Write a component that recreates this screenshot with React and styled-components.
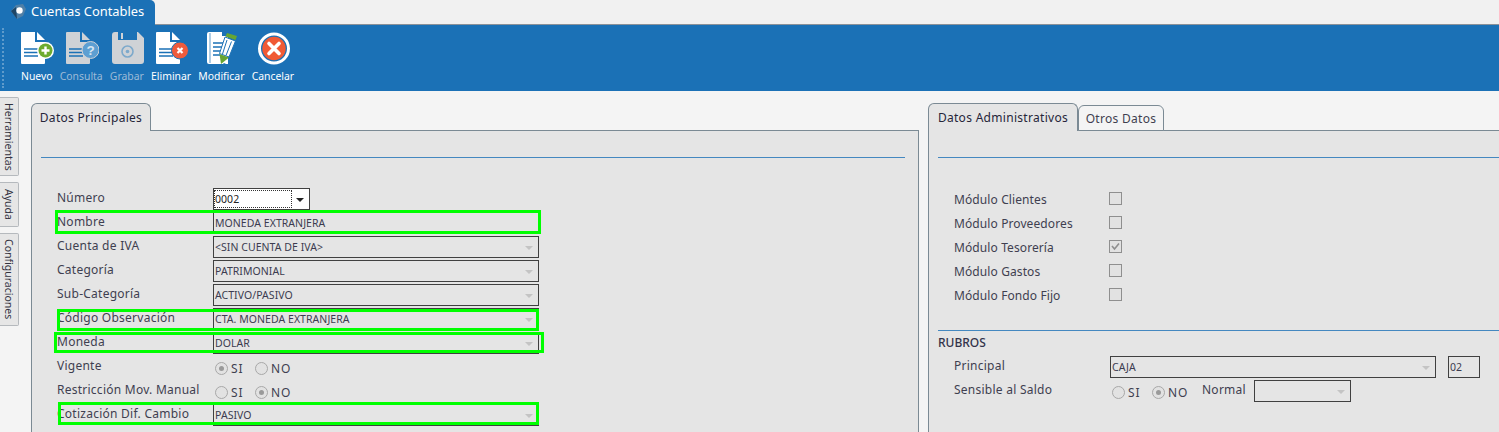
import React from 'react'
import styled, { createGlobalStyle } from 'styled-components'

const Global = createGlobalStyle`
  html, body {
    margin: 0;
    padding: 0;
    height: 432px;
    overflow: hidden;
    background: #f4f4f4;
    font-family: "Noto Sans", "Open Sans", sans-serif;
    font-size: 12px;
    color: #3f3f50;
  }
  * { box-sizing: border-box; }
`

const Page = styled.div`
  width: 1499px;
  height: 432px;
  overflow: hidden;
  position: relative;
`

const TopTabs = styled.div`
  height: 25px;
  background: #f1f1f1;
  border-bottom: 1px solid #8a9199;
`

const MainTab = styled.div`
  width: 155px;
  height: 25px;
  background: #1b71b6;
  border-top-right-radius: 5px;
  color: #fff;
  font-size: 12.9px;
  display: flex;
  align-items: center;
  gap: 5px;
  padding: 0 0 3px 11px;
`

const Toolbar = styled.div`
  height: 66px;
  background: #1b71b6;
  display: flex;
  padding: 7px 0 0 21px;
  gap: 7.2px;
  position: relative;

  &::before {
    content: '';
    position: absolute;
    left: 2px;
    top: 3px;
    bottom: 3px;
    border-left: 2px dotted #5f9bcb;
  }
`

const ToolButton = styled.div`
  display: flex;
  flex-direction: column;
  align-items: center;
  font-size: 10.4px;
  color: ${p => (p.$off ? '#9dbbd6' : '#fff')};
  gap: 4px;

  svg {
    margin: 0 -10px;
    position: relative;
    left: 1px;
  }
`

const Body = styled.div`
  display: flex;
  height: 341px;
`

const SideTabs = styled.div`
  width: 19px;
  padding-top: 6px;
  display: flex;
  flex-direction: column;
  gap: 6px;
  flex-shrink: 0;
`

const SideTab = styled.div`
  width: 19px;
  height: ${p => p.$h}px;
  background: #e6e6e6;
  border: 1px solid #b5b9bd;
  border-left: none;
  border-radius: 0 2px 2px 0;
  writing-mode: vertical-rl;
  display: flex;
  align-items: center;
  justify-content: center;
  font-size: 10.5px;
  color: #33333f;
`

const Panels = styled.div`
  flex: 1;
  display: flex;
  padding: 12px 0 0 12px;
  gap: 9px;
  min-width: 0;
`

const Panel = styled.div`
  width: ${p => p.$w}px;
  flex-shrink: 0;
  display: flex;
  flex-direction: column;
`

const TabRow = styled.div`
  display: flex;
  align-items: flex-end;
  height: 28px;
  position: relative;
  z-index: 1;
  margin-bottom: -1px;
`

const Tab = styled.div`
  height: ${p => (p.$active ? 28 : 26)}px;
  width: ${p => p.$w}px;
  background: ${p => (p.$active ? '#e5e5e5' : '#f4f4f4')};
  border: 1px solid #7b8a94;
  border-bottom: ${p => (p.$active ? 'none' : '1px solid #7b8a94')};
  border-radius: 6px 6px 0 0;
  display: flex;
  align-items: center;
  justify-content: center;
  font-size: 12px;
  letter-spacing: 0.3px;
  color: ${p => (p.$active ? '#26263a' : '#3f3f50')};
`

const Sheet = styled.div`
  flex: 1;
  background: #e5e5e5;
  border: 1px solid #7b8a94;
  border-bottom: none;
  padding: 26px 0 0 9px;
  ${p => p.$open && 'border-right: none;'}
`

const Rule = styled.div`
  height: 1px;
  background: #1b71b6;
  opacity: 0.8;
  margin-right: ${p => (p.$flush ? 0 : 13)}px;
`

const Form = styled.div`
  padding: 30px 0 0 16px;
  display: flex;
  flex-direction: column;
  gap: 2px;
`

const Row = styled.div`
  height: 22px;
  display: flex;
  align-items: center;
  position: relative;
`

const Label = styled.div`
  width: ${p => p.$w || 156}px;
  flex-shrink: 0;
  font-size: 12px;
  letter-spacing: 0.25px;
  margin-top: -3px;
  color: #3f3f50;
`

const ModuleLabel = styled(Label)`
  width: 155px;
  margin-top: 3px;
  letter-spacing: 0.1px;
`

const Select = styled.div`
  width: ${p => p.$w || 326}px;
  height: 22px;
  border: 1px solid #404040;
  background: ${p => (p.$white ? '#fff' : '#e5e5e5')};
  display: flex;
  align-items: center;
  padding-left: ${p => (p.$white ? 0 : 1)}px;
  font-size: 10.5px;
  letter-spacing: 0.05px;
  position: relative;
  color: ${p => (p.$white ? '#222' : '#3c3c50')};
`

const CodeBox = styled(Select)`
  margin-left: 12px;
`

const Arrow = styled.span`
  position: absolute;
  right: 5px;
  top: 9px;
  border-left: 4px solid transparent;
  border-right: 4px solid transparent;
  border-top: 4px solid ${p => (p.$dark ? '#222' : '#c4c4c4')};
`

const Focus = styled.span`
  border: 1px dotted #333;
  flex: 0 0 78px;
  height: 18px;
  display: flex;
  align-items: center;
`

const Highlight = styled.div`
  position: absolute;
  top: ${p => p.$t}px;
  left: ${p => p.$l}px;
  width: ${p => p.$w}px;
  height: ${p => p.$h}px;
  border: 3px solid #00ff00;
  pointer-events: none;
`

const RadioGroup = styled.div`
  display: flex;
  align-items: center;
  padding: 2px 0 0 2px;
`

const Radio = styled.span`
  width: 13px;
  height: 13px;
  border-radius: 50%;
  border: 1px solid #a8a8a8;
  background: #e2e2e2;
  display: inline-flex;
  align-items: center;
  justify-content: center;
  margin-right: 3px;

  &::after {
    content: '';
    width: 5px;
    height: 5px;
    border-radius: 50%;
    background: ${p => (p.$on ? '#9a9a9a' : 'transparent')};
  }
`

const RadioText = styled.span`
  font-size: 12px;
  letter-spacing: 1px;
  width: ${p => p.$w}px;
`

const CheckList = styled.div`
  padding: 30px 0 0 16px;
  display: flex;
  flex-direction: column;
  gap: 4px;
`

const CheckRow = styled.div`
  height: 20px;
  display: flex;
  align-items: center;
`

const Check = styled.span`
  width: 13px;
  height: 13px;
  border: 1px solid #8f8f8f;
  background: #e2e2e2;
  display: flex;
  align-items: center;
  justify-content: center;
`

const Section = styled.div`
  margin-top: 26px;
`

const SectionTitle = styled.div`
  font-size: 12px;
  font-weight: 500;
  color: #33334a;
  margin: 3px 0 5px;
`

const SubForm = styled.div`
  padding-left: 16px;
  display: flex;
  flex-direction: column;
  gap: 2px;
`

const blue = '#1b71b6'
const grey = '#cfd2d6'

const Logo = () => (
  <svg width="15" height="15" viewBox="0 0 15 15">
    <path d="M0 7 L5 1 L12 0 L15 5 L12 12 L6 15 L3 11 Z" fill="#4f7fa6" />
    <path d="M0 7 L5 3 L6 15 L3 11 Z" fill="#1d4668" />
    <circle cx="8.5" cy="6.5" r="3.2" fill="#fff" />
  </svg>
)

const Doc = ({ fill, children }) => (
  <svg width="33" height="33" viewBox="0 0 33 33">
    <path d="M1 0 H14 V10 H24 V31 Q24 32 23 32 H1 Q0 32 0 31 V1 Q0 0 1 0 Z" fill={fill} />
    <path d="M16 0 L24 8 H16 Z" fill={fill} />
    <path d="M3 17 H17 M3 20.5 H17 M3 24 H17" stroke={blue} strokeWidth="1.4" />
    {children}
  </svg>
)

const iconNuevo = (
  <Doc fill="#fff">
    <circle cx="24.5" cy="18.5" r="8.5" fill="#fff" />
    <circle cx="24.5" cy="18.5" r="7" fill="#6dab2f" />
    <path d="M24.5 14.5 V22.5 M20.5 18.5 H28.5" stroke="#fff" strokeWidth="2.4" />
  </Doc>
)

const iconConsulta = (
  <Doc fill={grey}>
    <circle cx="24.5" cy="18" r="8.5" fill="#5d9fd2" stroke={grey} />
    <text x="24.5" y="23" textAnchor="middle" fontSize="13.5" fontWeight="700" fill="#d8e6f0" fontFamily="Liberation Sans">?</text>
  </Doc>
)

const iconGrabar = (
  <svg width="32" height="33" viewBox="0 0 32 33">
    <path d="M3 0 H6 V8 H25 V0 H26 L32 6 V29 Q32 32 29 32 H3 Q0 32 0 29 V3 Q0 0 3 0 Z" fill={grey} />
    <rect x="9" y="1" width="2" height="6" fill={grey} />
    <circle cx="15.5" cy="19.5" r="5.5" fill="none" stroke="#7da9cb" strokeWidth="1.6" />
    <circle cx="15.5" cy="19.5" r="1.8" fill="#7da9cb" />
  </svg>
)

const iconEliminar = (
  <Doc fill="#fff">
    <circle cx="24" cy="18.5" r="8.5" fill="#ef5b3c" stroke={blue} />
    <path d="M21.5 16 L26.5 21 M26.5 16 L21.5 21" stroke="#fff" strokeWidth="2.2" />
  </Doc>
)

const iconModificar = (
  <svg width="31" height="33" viewBox="0 0 31 33">
    <path d="M0 2 Q0 0 2 0 H21 V32 H2 Q0 32 0 30 Z" fill="#fff" />
    <path d="M3 1 V31" stroke={blue} strokeWidth="0.7" />
    <path d="M6 11 H16 M6 15 H15 M6 19 H14 M6 23 H13" stroke={blue} strokeWidth="1.3" />
    <path d="M17 31 L21 33 H15 Z M15 0 H21 L21 4 H15 Z" fill={blue} />
    <path d="M20 1 L30 4 L28.5 8 L18.5 4.5 Z" fill="#67a532" />
    <path d="M18 5 L28.5 9 L22 25 L12.5 21.5 Z" fill="#fff" stroke={blue} strokeWidth="1" />
    <path d="M20 8 L15.5 22 M24.5 9.5 L19 23.5" stroke={blue} strokeWidth="1" />
    <path d="M12.5 22 L22 25.5 L14 32 Z" fill="#67a532" />
  </svg>
)

const iconCancelar = (
  <svg width="32" height="33" viewBox="0 0 32 33">
    <circle cx="16" cy="16.5" r="14.5" fill={blue} stroke="#fff" strokeWidth="3" />
    <circle cx="16" cy="16.5" r="11.7" fill="#f05a35" />
    <path d="M11 11.5 L21 21.5 M21 11.5 L11 21.5" stroke="#fff" strokeWidth="3.6" strokeLinecap="round" />
  </svg>
)

const checkMark = (
  <svg width="9" height="9" viewBox="0 0 9 9">
    <path d="M1 4 L3.5 7 L8 1.5" fill="none" stroke="#8f8f8f" strokeWidth="1.6" />
  </svg>
)

const tools = [
  { name: 'Nuevo', icon: iconNuevo },
  { name: 'Consulta', icon: iconConsulta, off: true },
  { name: 'Grabar', icon: iconGrabar, off: true },
  { name: 'Eliminar', icon: iconEliminar },
  { name: 'Modificar', icon: iconModificar },
  { name: 'Cancelar', icon: iconCancelar }
]

const combos = [
  ['Cuenta de IVA', '<SIN CUENTA DE IVA>'],
  ['Categoría', 'PATRIMONIAL'],
  ['Sub-Categoría', 'ACTIVO/PASIVO'],
  ['Código Observación', 'CTA. MONEDA EXTRANJERA'],
  ['Moneda', 'DOLAR']
]

const modules = ['Clientes', 'Proveedores', 'Tesorería', 'Gastos', 'Fondo Fijo']

const App = () => (
  <Page>
    <Global />
    <TopTabs>
      <MainTab>
        <Logo />
        Cuentas Contables
      </MainTab>
    </TopTabs>
    <Toolbar>
      {tools.map(t => (
        <ToolButton key={t.name} $off={t.off}>
          {t.icon}
          {t.name}
        </ToolButton>
      ))}
    </Toolbar>
    <Body>
      <SideTabs>
        <SideTab $h={79}>Herramientas</SideTab>
        <SideTab $h={45}>Ayuda</SideTab>
        <SideTab $h={93}>Configuraciones</SideTab>
      </SideTabs>
      <Panels>
        <Panel $w={888}>
          <TabRow>
            <Tab $active $w={120}>Datos Principales</Tab>
          </TabRow>
          <Sheet>
            <Rule />
            <Form>
              <Row>
                <Label>Número</Label>
                <Select $w={97} $white>
                  <Focus>0002</Focus>
                  <Arrow $dark />
                </Select>
              </Row>
              <Row>
                <Label>Nombre</Label>
                <Select>MONEDA EXTRANJERA</Select>
              </Row>
              {combos.map(([label, value]) => (
                <Row key={label}>
                  <Label>{label}</Label>
                  <Select>
                    {value}
                    <Arrow />
                  </Select>
                </Row>
              ))}
              <Row>
                <Label>Vigente</Label>
                <RadioGroup>
                  <Radio $on />
                  <RadioText $w={24}>SI</RadioText>
                  <Radio />
                  <RadioText>NO</RadioText>
                </RadioGroup>
              </Row>
              <Row>
                <Label>Restricción Mov. Manual</Label>
                <RadioGroup>
                  <Radio />
                  <RadioText $w={24}>SI</RadioText>
                  <Radio $on />
                  <RadioText>NO</RadioText>
                </RadioGroup>
              </Row>
              <Row>
                <Label>Cotización Dif. Cambio</Label>
                <Select>
                  PASIVO
                  <Arrow />
                </Select>
              </Row>
            </Form>
          </Sheet>
        </Panel>
        <Panel $w={600}>
          <TabRow>
            <Tab $active $w={150}>Datos Administrativos</Tab>
            <Tab $w={86}>Otros Datos</Tab>
          </TabRow>
          <Sheet $open>
            <Rule $flush />
            <CheckList>
              {modules.map(m => (
                <CheckRow key={m}>
                  <ModuleLabel>Módulo {m}</ModuleLabel>
                  <Check>{m === 'Tesorería' && checkMark}</Check>
                </CheckRow>
              ))}
            </CheckList>
            <Section>
              <Rule $flush />
              <SectionTitle>RUBROS</SectionTitle>
              <SubForm>
                <Row>
                  <Label>Principal</Label>
                  <Select>
                    CAJA
                    <Arrow />
                  </Select>
                  <CodeBox $w={32}>02</CodeBox>
                </Row>
                <Row>
                  <Label>Sensible al Saldo</Label>
                  <RadioGroup>
                    <Radio />
                    <RadioText $w={24}>SI</RadioText>
                    <Radio $on />
                    <RadioText $w={34}>NO</RadioText>
                  </RadioGroup>
                  <Label $w={52}>Normal</Label>
                  <Select $w={97}>
                    <Arrow />
                  </Select>
                </Row>
              </SubForm>
            </Section>
          </Sheet>
        </Panel>
      </Panels>
      <Highlight $t={210} $l={55} $w={486} $h={24} />
      <Highlight $t={309} $l={57} $w={482} $h={22} />
      <Highlight $t={332} $l={54} $w={490} $h={21} />
      <Highlight $t={402} $l={58} $w={481} $h={23} />
    </Body>
  </Page>
)

export default App
